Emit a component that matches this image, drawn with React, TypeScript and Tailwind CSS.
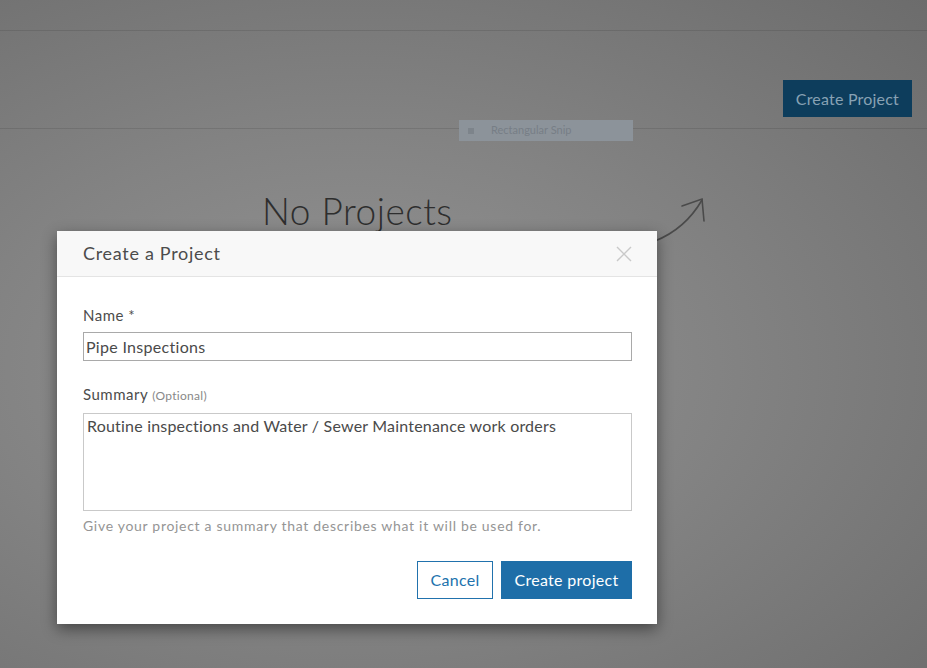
import React from 'react';

const font = { fontFamily: '"Lato", "Open Sans", sans-serif' };

const App: React.FC = () => {
  return (
    <div
      className="relative w-[927px] h-[668px] overflow-hidden bg-[radial-gradient(ellipse_at_38%_55%,#949494_0%,#838383_45%,#6c6c6c_100%)]"
      style={font}
    >
      {/* dimmed page */}
      <div className="h-[31px] border-b border-black/10" />
      <div className="h-[98px] border-b border-black/10 flex items-start justify-end pr-[15px] pt-[49px]">
        <button className="h-[37px] px-[13px] bg-[#0d3d5c] text-[#88a2b4] text-[16px] tracking-[0.2px]">Create Project</button>
      </div>
      <div className="flex items-start pl-[262px] pt-[60px]">
        <h1 className="text-[37px] font-light text-[#2e2e2e] leading-[44px] tracking-[0.5px]">No Projects</h1>
        <svg width="60" height="50" viewBox="0 0 60 50" className="ml-[200px] mt-[6px]" fill="none" stroke="#4a4a4a" strokeWidth="1.6" strokeLinecap="round">
          <path d="M2 46 C 22 38, 38 24, 49 5" />
          <path d="M29 11 L 49 4 L 51 26" />
        </svg>
      </div>

      {/* snip tooltip */}
      <div className="absolute left-[459px] top-[120px] w-[174px] h-[21px] bg-[#8c939a] flex items-center">
        <span className="ml-[9px] w-[6px] h-[6px] bg-[#7d848b]" />
        <span className="ml-[17px] text-[11px] text-[#777e86]">Rectangular Snip</span>
      </div>

      {/* modal */}
      <div className="absolute left-[57px] top-[231px] w-[600px] bg-white shadow-[0_5px_14px_rgba(0,0,0,0.45)]">
        <div className="h-[46px] bg-[#f8f8f8] border-b border-[#e4e4e4] flex items-center justify-between pl-[26px] pr-[24px]">
          <h2 className="text-[18px] text-[#4c4c4c] tracking-[0.7px]">Create a Project</h2>
          <svg width="18" height="18" viewBox="0 0 18 18" stroke="#c9c9c9" strokeWidth="1.4">
            <path d="M2 2 L16 16 M16 2 L2 16" />
          </svg>
        </div>
        <div className="pl-[26px] pr-[25px] pt-[28px] pb-[25px]">
          <label className="block text-[15px] text-[#4c4c4c] tracking-[0.5px] leading-[20px]">Name *</label>
          <div className="mt-[7px] w-[549px] h-[29px] border border-[#a9a9a9] flex items-center pl-[2px] text-[16px] text-[#4a4a4a] tracking-[0.3px]">
            Pipe Inspections
          </div>
          <label className="block mt-[23px] text-[15px] text-[#4c4c4c] tracking-[0.5px] leading-[20px]">
            Summary <span className="text-[12px] text-[#888] tracking-[0.3px]">(Optional)</span>
          </label>
          <div className="mt-[7px] w-[549px] h-[98px] border border-[#c9c9c9] pl-[3px] pt-[1px] text-[16px] text-[#4a4a4a] leading-[22px] tracking-[0.2px]">
            Routine inspections and Water / Sewer Maintenance work orders
          </div>
          <p className="mt-[4px] text-[14px] text-[#959595] tracking-[0.7px]">
            Give your project a summary that describes what it will be used for.
          </p>
          <div className="mt-[25px] flex justify-end gap-[8px]">
            <button className="w-[76px] h-[38px] border border-[#2172ad] text-[#2172ad] text-[16px] bg-white tracking-[0.3px]">Cancel</button>
            <button className="w-[131px] h-[38px] bg-[#1e6ea8] text-white text-[16px] tracking-[0.3px]">Create project</button>
          </div>
        </div>
      </div>
    </div>
  );
};

export default App;
